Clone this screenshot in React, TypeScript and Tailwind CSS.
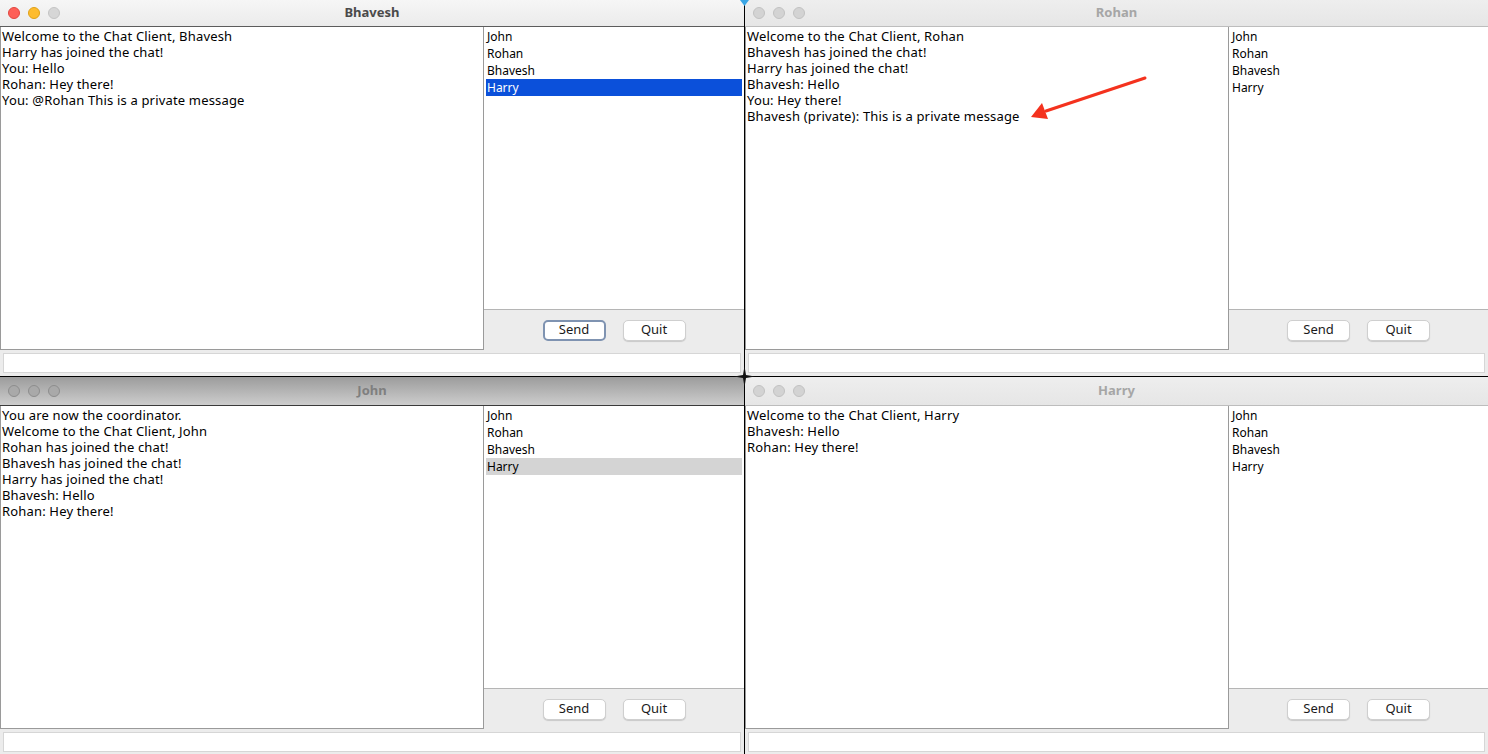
import React from "react";

type TitleTone = "active" | "inactive" | "shaded";

interface ChatWindowProps {
  title: string;
  tone: TitleTone;
  messages: string[];
  users: string[];
  selected?: number;
  selectionStyle?: "focused" | "unfocused";
  sendFocused?: boolean;
  tallTitle?: boolean;
}

const USERS = ["John", "Rohan", "Bhavesh", "Harry"];

function TrafficLights({ tone }: { tone: TitleTone }) {
  if (tone === "active") {
    return (
      <div className="flex items-center gap-[8px]">
        <span className="h-[12px] w-[12px] rounded-full border border-[#e2463f] bg-[#fe5f57]" />
        <span className="h-[12px] w-[12px] rounded-full border border-[#e1a116] bg-[#febc2e]" />
        <span className="h-[12px] w-[12px] rounded-full border border-[#c4c4c4] bg-[#d6d6d6]" />
      </div>
    );
  }
  const dot =
    tone === "shaded"
      ? "border-[#8d8d8d] bg-[#a9a9a9]"
      : "border-[#c2c2c2] bg-[#d3d3d3]";
  return (
    <div className="flex items-center gap-[8px]">
      <span className={`h-[12px] w-[12px] rounded-full border ${dot}`} />
      <span className={`h-[12px] w-[12px] rounded-full border ${dot}`} />
      <span className={`h-[12px] w-[12px] rounded-full border ${dot}`} />
    </div>
  );
}

function MacButton({ label, focused }: { label: string; focused?: boolean }) {
  return (
    <button
      className={`flex h-[21px] w-[63px] items-center justify-center rounded-[5px] bg-white text-[13px] text-[#1a1a1a] ${
        focused
          ? "border-2 border-[#7f93b1]"
          : "border border-[#cfcfcf] shadow-[0_1px_1px_rgba(0,0,0,0.15)]"
      }`}
    >
      {label}
    </button>
  );
}

function ChatWindow({
  title,
  tone,
  messages,
  users,
  selected,
  selectionStyle,
  sendFocused,
  tallTitle,
}: ChatWindowProps) {
  const titleBar =
    tone === "active"
      ? "bg-gradient-to-b from-[#f6f6f6] to-[#ebebeb] border-[#5c5c5c]"
      : tone === "shaded"
        ? "bg-gradient-to-b from-[#9c9c9c] to-[#cdcdcd] border-[#3a3a3a]"
        : "bg-gradient-to-b from-[#eeeeee] to-[#e6e6e6] border-[#bdbdbd]";
  const titleText =
    tone === "active"
      ? "text-[#4a4a4a]"
      : tone === "shaded"
        ? "text-[#7f7f7f]"
        : "text-[#a6a6a6]";

  return (
    <div className="flex h-full flex-col bg-[#ececec]">
      <div
        className={`relative flex shrink-0 items-center border-b px-[8px] ${
          tallTitle ? "h-[29px]" : "h-[27px]"
        } ${titleBar}`}
      >
        <TrafficLights tone={tone} />
        <div
          className={`absolute inset-0 flex items-center justify-center text-[13px] font-bold ${titleText}`}
        >
          {title}
        </div>
      </div>

      <div className="flex h-[323px] shrink-0">
        <div className="w-[484px] shrink-0 border border-t-0 border-[#9a9a9a] bg-white px-[1px] pt-[1px] text-[13px] leading-[16px] tracking-[0.17px] text-black">
          {messages.map((m, i) => (
            <div key={i} className="whitespace-pre">
              {m}
            </div>
          ))}
        </div>
        <div className="flex flex-1 flex-col">
          <div className="h-[283px] border-b border-[#b5b5b5] bg-white px-[2px] pt-[1px] text-[12px] leading-[17px] text-black">
            {users.map((u, i) => {
              const isSel = i === selected;
              const sel = !isSel
                ? ""
                : selectionStyle === "focused"
                  ? "bg-[#0b50da] text-white"
                  : "bg-[#d4d4d4]";
              return (
                <div key={u} className={`px-[1px] ${sel}`}>
                  {u}
                </div>
              );
            })}
          </div>
          <div className="flex flex-1 items-center justify-center gap-[17px]">
            <MacButton label="Send" focused={sendFocused} />
            <MacButton label="Quit" />
          </div>
        </div>
      </div>

      <div className="px-[3px] pt-[3px]">
        <div className="h-[20px] border border-[#d6d6d6] bg-white" />
      </div>
    </div>
  );
}

export default function App() {
  return (
    <div
      className="relative h-[754px] w-[1488px] overflow-hidden bg-black"
      style={{ fontFamily: '"Noto Sans", "DejaVu Sans", sans-serif' }}
    >
      <div className="grid h-full grid-cols-[744px_743px] grid-rows-[376px_377px] gap-px">
        <ChatWindow
          title="Bhavesh"
          tone="active"
          messages={[
            "Welcome to the Chat Client, Bhavesh",
            "Harry has joined the chat!",
            "You: Hello",
            "Rohan: Hey there!",
            "You: @Rohan This is a private message",
          ]}
          users={USERS}
          selected={3}
          selectionStyle="focused"
          sendFocused
        />
        <ChatWindow
          title="Rohan"
          tone="inactive"
          messages={[
            "Welcome to the Chat Client, Rohan",
            "Bhavesh has joined the chat!",
            "Harry has joined the chat!",
            "Bhavesh: Hello",
            "You: Hey there!",
            "Bhavesh (private): This is a private message",
          ]}
          users={USERS}
        />
        <ChatWindow
          title="John"
          tone="shaded"
          tallTitle
          messages={[
            "You are now the coordinator.",
            "Welcome to the Chat Client, John",
            "Rohan has joined the chat!",
            "Bhavesh has joined the chat!",
            "Harry has joined the chat!",
            "Bhavesh: Hello",
            "Rohan: Hey there!",
          ]}
          users={USERS}
          selected={3}
          selectionStyle="unfocused"
        />
        <ChatWindow
          title="Harry"
          tone="inactive"
          tallTitle
          messages={[
            "Welcome to the Chat Client, Harry",
            "Bhavesh: Hello",
            "Rohan: Hey there!",
          ]}
          users={USERS}
        />
      </div>

      {/* annotation arrow */}
      <svg
        className="pointer-events-none absolute left-0 top-0"
        width="1488"
        height="754"
      >
        <line
          x1="1145"
          y1="78"
          x2="1046"
          y2="111"
          stroke="#f4321e"
          strokeWidth="3"
          strokeLinecap="round"
        />
        <polygon points="1031,117 1042,103 1048,119" fill="#f4321e" />
      </svg>

      {/* window corner sparkle */}
      <svg
        className="pointer-events-none absolute left-[734px] top-[366px]"
        width="21"
        height="21"
        viewBox="0 0 21 21"
      >
        <path d="M10.5 0 L12 9 L21 10.5 L12 12 L10.5 21 L9 12 L0 10.5 L9 9 Z" fill="#111" />
      </svg>
      <svg
        className="pointer-events-none absolute left-[740px] top-0"
        width="9"
        height="6"
        viewBox="0 0 9 6"
      >
        <polygon points="0,0 9,0 4.5,6" fill="#3ba7e6" />
      </svg>
    </div>
  );
}
